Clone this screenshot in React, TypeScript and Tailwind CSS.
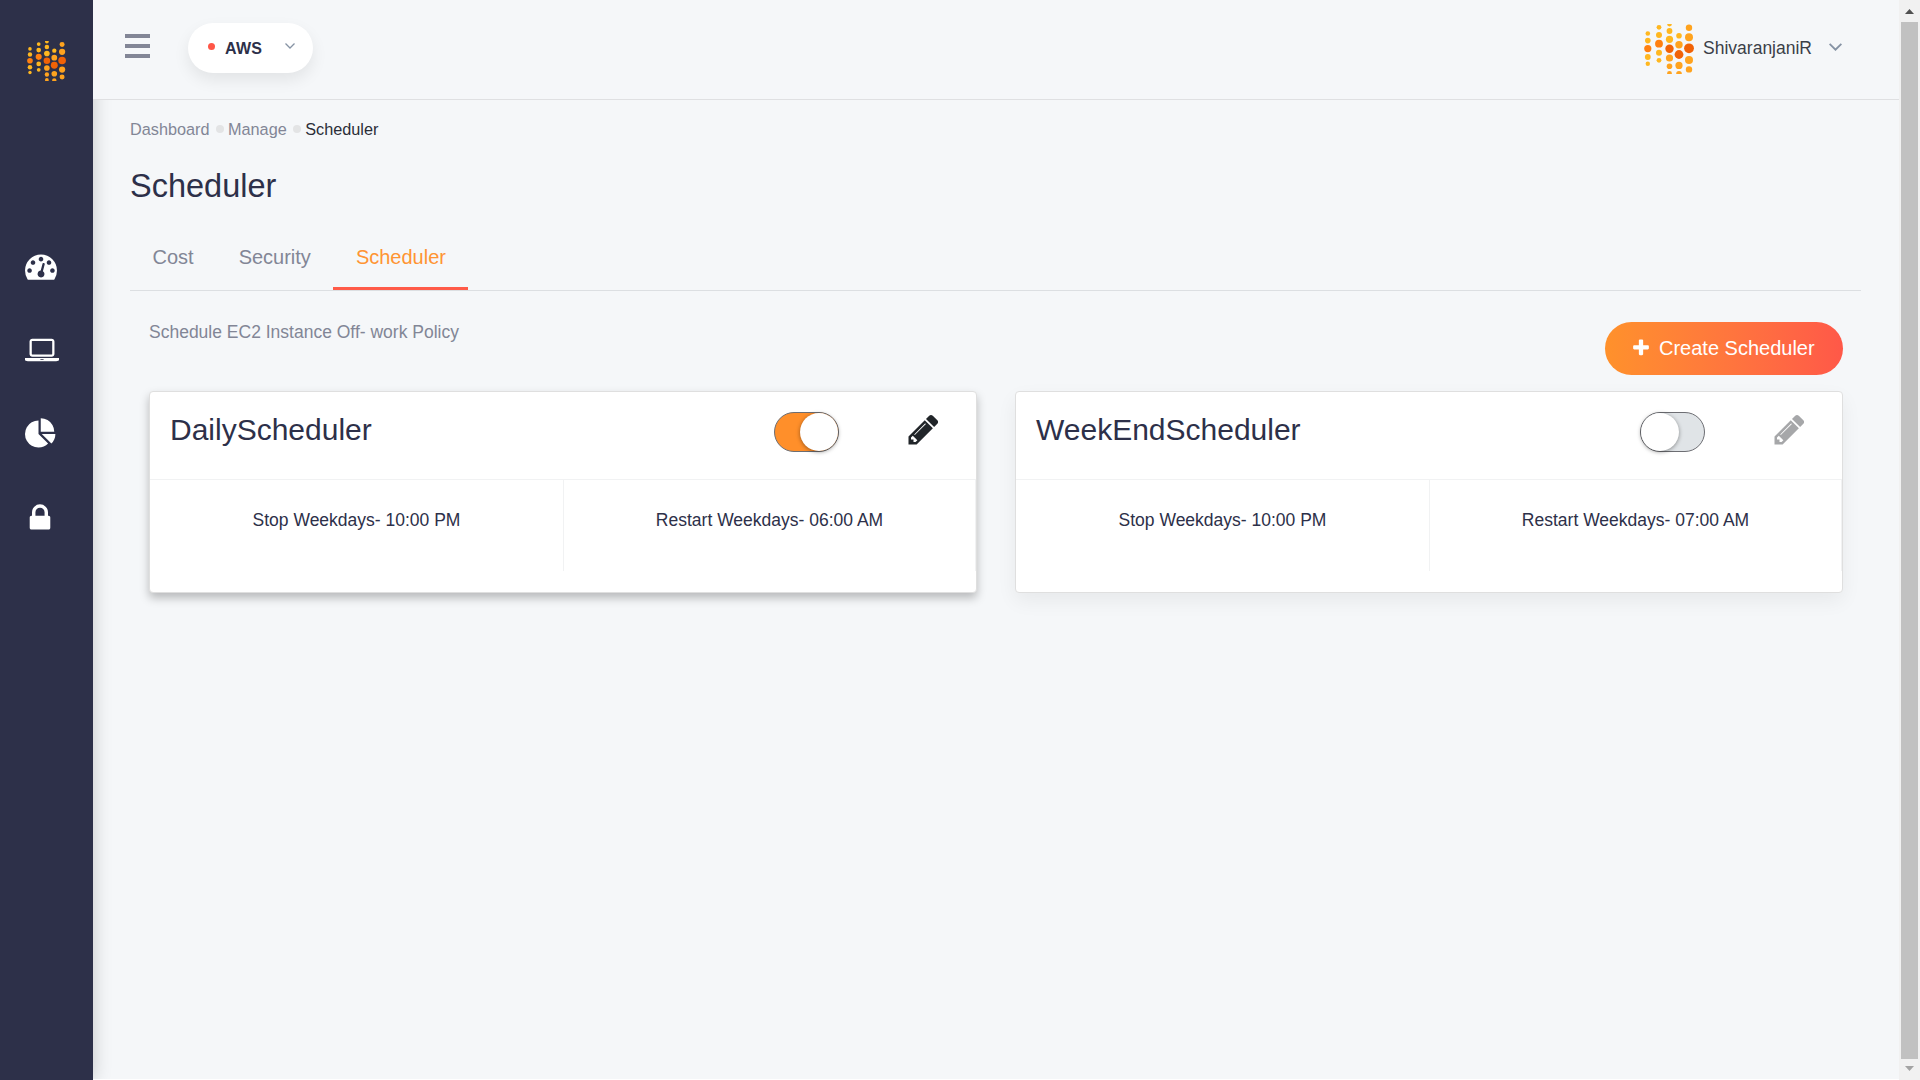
import React from "react";

const ICONS = {
  gauge:
    "M384 1152q0-53-37.5-90.5t-90.5-37.5-90.5 37.5-37.5 90.5 37.5 90.5 90.5 37.5 90.5-37.5 37.5-90.5zm192-448q0-53-37.5-90.5t-90.5-37.5-90.5 37.5-37.5 90.5 37.5 90.5 90.5 37.5 90.5-37.5 37.5-90.5zm428 481l101-382q6-26-7.5-48.5t-38.5-29.5-48 6.5-30 39.5l-101 382q-60 5-107 43.5t-63 98.5q-20 77 20 146t117 89 146-20 89-117q16-60-6-117t-72-91zm660-33q0-53-37.5-90.5t-90.5-37.5-90.5 37.5-37.5 90.5 37.5 90.5 90.5 37.5 90.5-37.5 37.5-90.5zm-640-640q0-53-37.5-90.5t-90.5-37.5-90.5 37.5-37.5 90.5 37.5 90.5 90.5 37.5 90.5-37.5 37.5-90.5zm448 192q0-53-37.5-90.5t-90.5-37.5-90.5 37.5-37.5 90.5 37.5 90.5 90.5 37.5 90.5-37.5 37.5-90.5zm320 448q0 261-141 483-19 29-54 29h-1402q-35 0-54-29-141-221-141-483 0-182 71-348t191-286 286-191 348-71 348 71 286 191 191 286 71 348z",
  laptop:
    "M416 1280q-66 0-113-47t-47-113v-704q0-66 47-113t113-47h1088q66 0 113 47t47 113v704q0 66-47 113t-113 47h-1088zm-32-864v704q0 13 9.5 22.5t22.5 9.5h1088q13 0 22.5-9.5t9.5-22.5v-704q0-13-9.5-22.5t-22.5-9.5h-1088q-13 0-22.5 9.5t-9.5 22.5zm1376 928h160v96q0 40-47 68t-113 28h-1600q-66 0-113-28t-47-68v-96h1760zm-720 96q16 0 16-16t-16-16h-160q-16 0-16 16t16 16h160z",
  pie: "M768 890l546 546q-106 108-247.5 168t-298.5 60q-209 0-385.5-103t-279.5-279.5-103-385.5 103-385.5 279.5-279.5 385.5-103v762zm187 6h773q0 157-60 298.5t-168 247.5zm709-128h-768v-768q209 0 385.5 103t279.5 279.5 103 385.5z",
  lock: "M640 768h512v-192q0-106-75-181t-181-75-181 75-75 181v192zm832 96v576q0 40-28 68t-68 28h-960q-40 0-68-28t-28-68v-576q0-40 28-68t68-28h32v-192q0-184 132-316t316-132 316 132 132 316v192h32q40 0 68 28t28 68z",
  pencil:
    "M491 1536l91-91-235-235-91 91v107h128v128h107zm523-928q0-22-22-22-10 0-17 7l-542 542q-7 7-7 17 0 22 22 22 10 0 17-7l542-542q7-7 7-17zm-54-192l416 416-832 832h-416v-416zm683 96q0 53-37 90l-166 166-416-416 166-165q36-38 90-38 53 0 91 38l235 234q37 39 37 91z",
  plus: "M1600 736v192q0 40-28 68t-68 28h-416v416q0 40-28 68t-68 28h-192q-40 0-68-28t-28-68v-416h-416q-40 0-68-28t-28-68v-192q0-40 28-68t68-28h416v-416q0-40 28-68t68-28h192q40 0 68 28t28 68v416h416q40 0 68 28t28 68z",
};

function Icon({ name, width = 1792, className }: { name: keyof typeof ICONS; width?: number; className: string }) {
  return (
    <svg viewBox={`0 0 ${width} 1792`} fill="currentColor" className={className}>
      <path d={ICONS[name]} />
    </svg>
  );
}

const Y = "#ffb71f";
const A = "#ffa31e";
const O = "#ff7f10";
const D = "#f16206";

const LOGO_DOTS: [number, number, number, string][] = [
  [3.8, 9.5, 2.3, Y], [3.8, 16.6, 2.8, Y], [3.8, 24.6, 3.6, O], [3.8, 33, 2.9, Y], [3.8, 39.8, 2.2, Y],
  [15, 3.3, 2.4, Y], [15, 11, 3, Y], [15, 19.7, 3.9, O], [15, 28.8, 3, Y], [15, 36.3, 2.4, Y],
  [25.5, 0.1, 2.4, Y], [25.5, 7, 2.9, Y], [25.5, 15.3, 3.6, Y], [25.5, 24.8, 4.2, D], [25.5, 34, 3.6, A], [25.5, 42.3, 2.8, A], [25.5, 49.3, 2.4, A],
  [35, 11.7, 2.8, Y], [35, 20.7, 3.7, A], [35, 30.5, 4.4, D], [35, 41.4, 3.6, A], [35, 49.8, 2.8, A],
  [45, 3.8, 3.2, A], [45, 13.3, 4, A], [45, 24.3, 4.9, D], [45, 36, 4, A], [45, 45.4, 3.2, A],
];

function Logo({ className }: { className: string }) {
  return (
    <svg viewBox="0 0 50 50" className={className}>
      {LOGO_DOTS.map(([x, y, r, c], i) => (
        <circle key={i} cx={x} cy={y} r={r} fill={c} />
      ))}
    </svg>
  );
}

function Sidebar() {
  return (
    <aside className="w-[93px] shrink-0 bg-[#2d3049] text-white shadow-[0_0_18px_rgba(0,0,0,0.2)]">
      <Logo className="ml-[27px] mt-[41px] h-10 w-[39px]" />
      <nav className="ml-[24.5px] mt-[168.5px] flex flex-col items-start">
        <Icon name="gauge" className="h-8 w-8" />
        <Icon name="laptop" width={1920} className="mt-[52px] h-8 w-[34px]" />
        <Icon name="pie" className="mt-[52.5px] h-8 w-[31.5px]" />
        <Icon name="lock" className="-ml-[0.5px] mt-[52px] h-8 w-8" />
      </nav>
    </aside>
  );
}

function Header() {
  return (
    <header className="relative flex h-[100px] shrink-0 border-b border-[#dfe0e2] bg-[#f5f7f9]">
      <button className="ml-8 mt-[34px] flex h-6 w-[25px] flex-col justify-between">
        <span className="h-1 w-full bg-[#828696]" />
        <span className="h-1 w-full bg-[#828696]" />
        <span className="h-1 w-full bg-[#828696]" />
      </button>
      <button className="ml-[38px] mt-[23px] flex h-[50px] w-[125px] items-center rounded-full bg-white pl-5 shadow-[0_7px_16px_rgba(0,0,0,0.08)]">
        <span className="mb-[3px] size-[7px] rounded-full bg-[#ff5647]" />
        <span className="ml-[10px] mt-[2px] w-[60px] text-left text-[16px] font-bold tracking-[0.3px] text-[#2d3049]">AWS</span>
        <svg viewBox="0 0 10 6" className="mb-[4px] h-[6px] w-[10px]" fill="none" stroke="#8693a4" strokeWidth="1.3">
          <path d="M.5.5 5 5 9.5.5" />
        </svg>
      </button>
      <div className="ml-auto mr-[57px] mt-6 flex h-[50px] items-center">
        <Logo className="size-[50px]" />
        <span className="-mt-[2px] ml-[9px] text-[17.5px] leading-6 text-[#3b3f48]">ShivaranjaniR</span>
        <svg viewBox="0 0 13 8" className="mb-[5px] ml-[17px] h-2 w-[13px]" fill="none" stroke="#8693a4" strokeWidth="1.9">
          <path d="M.6.8 6.5 6.7 12.4.8" />
        </svg>
      </div>
    </header>
  );
}

function Toggle({ on }: { on: boolean }) {
  return (
    <span
      className={`flex h-10 w-[65px] items-center rounded-full border border-[#6d6e73] ${
        on ? "justify-end bg-[#ff8f2a]" : "justify-start bg-[#e0e4e7]"
      }`}
    >
      <span className="size-[38px] rounded-full bg-white shadow-[0_1px_4px_rgba(0,0,0,0.4)]" />
    </span>
  );
}

function Card({ title, stop, restart, on }: { title: string; stop: string; restart: string; on: boolean }) {
  return (
    <section
      className={`h-[202px] w-[828px] rounded-[4px] border border-[#dfdfdf] bg-white ${
        on ? "shadow-[0_5px_10px_rgba(0,0,0,0.25)]" : "shadow-[0_8px_20px_rgba(0,0,0,0.06)]"
      }`}
    >
      <div className="flex h-[88px] border-b border-[#f1f2f3] pl-5 pr-[35px] pt-5">
        <h2 className="grow text-[30px] leading-9 text-[#2d3049]">{title}</h2>
        <Toggle on={on} />
        <Icon
          name="pencil"
          className={on ? "ml-[67px] size-[35px] text-[#212529]" : "ml-[67px] size-[35px] text-[#a6a7a9]"}
        />
      </div>
      <div className="flex h-[91px] text-center text-[17.5px] leading-[26px] text-[#2d3049]">
        <div className="w-[414px] border-r border-[#f1f2f3] pt-[27px]">{stop}</div>
        <div className="grow border-r border-[#f1f2f3] pt-[27px]">{restart}</div>
      </div>
    </section>
  );
}

function Scrollbar() {
  return (
    <div className="flex w-[21px] shrink-0 flex-col items-center bg-[#f1f1f1]">
      <svg viewBox="0 0 21 22" className="h-[22px] w-[21px]" fill="#505050">
        <path d="M6 14 10.5 9 15 14z" />
      </svg>
      <div className="w-[17px] grow bg-[#c1c1c1]" />
      <svg viewBox="0 0 21 21" className="h-[21px] w-[21px]" fill="#a3a3a3">
        <path d="M6 7h9l-4.500 5z" />
      </svg>
    </div>
  );
}

export default function App() {
  return (
    <div className="flex h-[1080px] w-[1920px] overflow-hidden bg-[#f5f7f9] font-['Liberation_Sans',Arial,sans-serif]">
      <Sidebar />
      <div className="flex min-w-0 grow flex-col">
        <Header />
        <main className="grow border-b border-white pl-[37px] pr-[38px] pt-[17px]">
          <nav className="flex h-6 items-center text-[16.25px] leading-6 text-[#828696]">
            <span>Dashboard</span>
            <span className="ml-[6px] mr-[4.5px] size-2 rounded-full bg-[#e3e4e5]" />
            <span>Manage</span>
            <span className="ml-[6px] mr-[4.5px] size-2 rounded-full bg-[#e3e4e5]" />
            <span className="text-[#2b2e38]">Scheduler</span>
          </nav>
          <h1 className="mt-[25px] text-[32.5px] leading-10 text-[#2d3049]">Scheduler</h1>
          <div className="mt-[26px] flex h-[59px] border-b border-[#dcdfe2] text-xl leading-[50px] text-[#828696]">
            <span className="h-[58px] px-[22.5px]">Cost</span>
            <span className="h-[58px] px-[22.5px]">Security</span>
            <span className="h-[58px] border-b-[3px] border-[#ff5b49] px-[22.5px] text-[#ff9433]">Scheduler</span>
          </div>
          <div className="ml-[19px] flex h-[100px] w-[1694px] justify-between pt-[31px]">
            <p className="-mt-[3px] text-[17.5px] leading-[26px] text-[#828696]">Schedule EC2 Instance Off- work Policy</p>
            <button className="flex h-[53px] w-[238px] items-center rounded-full bg-gradient-to-r from-[#ff912b] to-[#ff5848] pl-[26px] text-xl text-white">
              <Icon name="plus" className="mb-px size-5" />
              <span className="-mt-[2px] ml-2">Create Scheduler</span>
            </button>
          </div>
          <div className="ml-[19px] flex gap-[38px]">
            <Card title="DailyScheduler" stop="Stop Weekdays- 10:00 PM" restart="Restart Weekdays- 06:00 AM" on />
            <Card title="WeekEndScheduler" stop="Stop Weekdays- 10:00 PM" restart="Restart Weekdays- 07:00 AM" on={false} />
          </div>
        </main>
      </div>
      <Scrollbar />
    </div>
  );
}
